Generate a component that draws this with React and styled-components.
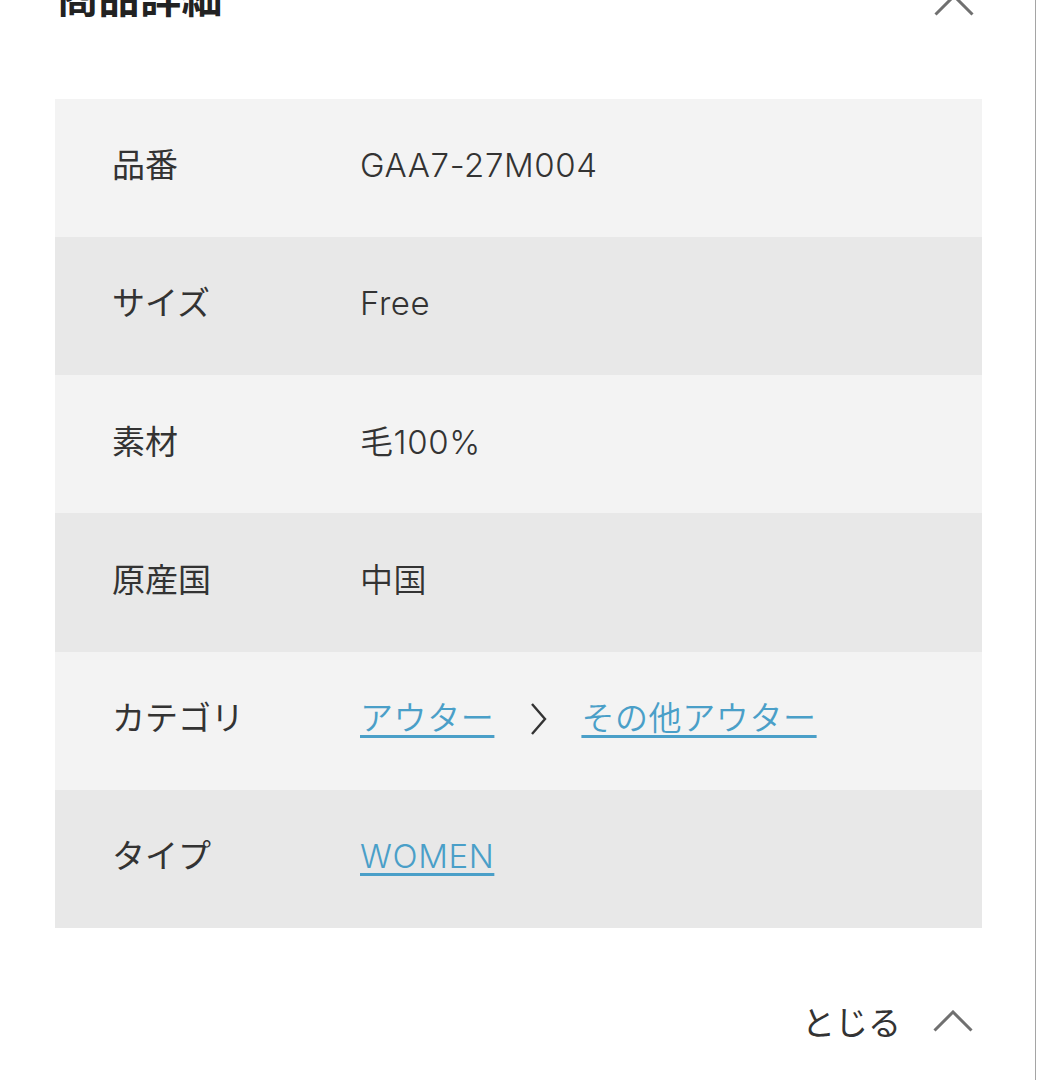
import React from 'react'
import styled, { createGlobalStyle } from 'styled-components'

const GlobalStyle = createGlobalStyle`
  html, body {
    margin: 0;
    padding: 0;
    background: #fff;
  }
  body {
    font-family: Inter, "Noto Sans CJK JP", sans-serif;
    color: #333;
    overflow: hidden;
  }
`

const rows = [
    { label: '品番', value: 'GAA7-27M004' },
    { label: 'サイズ', value: 'Free' },
    { label: '素材', value: '毛100%' },
    { label: '原産国', value: '中国' },
    { label: 'カテゴリ', links: ['アウター', 'その他アウター'] },
    { label: 'タイプ', links: ['WOMEN'] },
]

function Chevron({ size = 40, color = '#707070', width = 3 }) {
    return (
        <svg width={size} height={size / 2 + 2} viewBox="0 0 40 22" fill="none">
            <path d="M1.5 20.5 L20 2 L38.5 20.5" stroke={color} strokeWidth={width} />
        </svg>
    )
}

function App() {
    return (
        <Page>
            <GlobalStyle />
            <Header>
                <Title>商品詳細</Title>
                <Chevron />
            </Header>
            <Table>
                {rows.map((row, i) => (
                    <Row key={row.label} $even={i % 2 === 1}>
                        <Label>{row.label}</Label>
                        <Value>
                            {row.value}
                            {row.links && row.links.map((link, j) => (
                                <React.Fragment key={link}>
                                    {j > 0 && (
                                        <Crumb>
                                            <svg width="18" height="34" viewBox="0 0 18 34" fill="none">
                                                <path d="M2 2 L15 17 L2 32" stroke="#333" strokeWidth="2.4" />
                                            </svg>
                                        </Crumb>
                                    )}
                                    <Link href="#">{link}</Link>
                                </React.Fragment>
                            ))}
                        </Value>
                    </Row>
                ))}
            </Table>
            <Footer>
                <Close>
                    とじる
                    <Chevron />
                </Close>
            </Footer>
        </Page>
    )
}

export default App

const Page = styled.div`
    display: flow-root;
    width: 1035px;
    height: 1080px;
    border-right: 1px solid #a5a5a5;
    overflow: hidden;
`

const Header = styled.header`
    display: flex;
    align-items: flex-end;
    justify-content: space-between;
    margin-top: -26px;
    padding: 0 61px 0 57px;
    height: 42px;
`

const Title = styled.h2`
    margin: 0;
    font-family: "Noto Sans CJK JP", sans-serif;
    font-size: 41px;
    line-height: 42px;
    font-weight: 700;
    color: #222;
    letter-spacing: 0.5px;
`

const Table = styled.dl`
    margin: 83px 0 0 55px;
    width: 927px;
`

const Row = styled.div`
    display: grid;
    grid-template-columns: 248px 1fr;
    align-items: center;
    height: 138.17px;
    padding: 0 0 4px 57px;
    box-sizing: border-box;
    background: ${(p) => (p.$even ? '#e8e8e8' : '#f3f3f3')};
    font-size: 33px;
    line-height: 1.2;
    font-weight: 400;
`

const Label = styled.dt`
    margin: 0;
    color: #333;
`

const Value = styled.dd`
    margin: 0;
    display: flex;
    align-items: center;
    color: #333;
    font-weight: 350;
    letter-spacing: 0.6px;
`

const Link = styled.a`
    color: #4a9fc8;
    text-decoration: underline;
    text-decoration-thickness: 3px;
    text-underline-offset: 5px;
`

const Crumb = styled.span`
    display: inline-flex;
    margin: 0 33px 0 36px;
`

const Footer = styled.div`
    display: flex;
    justify-content: flex-end;
    padding: 69px 62px 0 0;
`

const Close = styled.button`
    display: flex;
    align-items: center;
    gap: 32px;
    border: none;
    background: none;
    padding: 0;
    font-family: inherit;
    font-size: 33px;
    color: #333;
`
